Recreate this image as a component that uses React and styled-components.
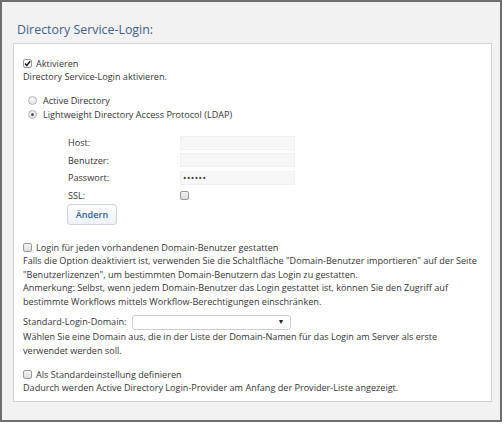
import React, { useState } from "react";
import styled, { createGlobalStyle } from "styled-components";

const Global = createGlobalStyle`
  html, body {
    margin: 0;
    padding: 0;
    background: #ffffff;
  }
  body {
    font-family: "Open Sans", "Noto Sans", sans-serif;
    color: #333333;
  }
`;

const Frame = styled.div`
  box-sizing: border-box;
  width: 502px;
  height: 422px;
  border: 2px solid #6e6e6e;
  background: #f2f2f2;
  padding: 0 8px 0 11px;
`;

const Title = styled.h2`
  margin: 0;
  padding: 20px 0 0 4px;
  height: 21px;
  font-size: 12.4px;
  font-weight: 400;
  line-height: 16px;
  color: #3f6189;
`;

const Panel = styled.div`
  box-sizing: border-box;
  height: 359px;
  background: #ffffff;
  border: 1px solid #d2d2d2;
  padding: 12.5px 9px 0 9px;
  font-size: 9.1px;
  line-height: 13.5px;
  white-space: nowrap;
`;

const CheckRow = styled.label`
  display: flex;
  align-items: center;
  gap: 4px;
  height: 13.5px;
`;

const Box = styled.span`
  box-sizing: border-box;
  width: 9px;
  height: 9px;
  border: 1px solid #9a9a9a;
  border-radius: 2px;
  background: ${(p) => (p.$on ? "#ffffff" : "linear-gradient(#f4f4f4, #dcdcdc)")};
  display: flex;
  align-items: center;
  justify-content: center;
  flex: none;
`;

const Text = styled.div`
  margin: 0;
`;

const RadioList = styled.div`
  margin: 10px 0 0 5px;
  display: flex;
  flex-direction: column;
  gap: 1px;
`;

const RadioRow = styled.label`
  display: flex;
  align-items: center;
  gap: 6px;
  height: 13.5px;
`;

const Dot = styled.span`
  box-sizing: border-box;
  width: 9px;
  height: 9px;
  border-radius: 50%;
  border: 1px solid #b5b5b5;
  background: radial-gradient(circle at 50% 40%, #fbfbfb, #d8d8d8);
  display: flex;
  align-items: center;
  justify-content: center;
  flex: none;
  &::after {
    content: "";
    width: 3px;
    height: 3px;
    border-radius: 50%;
    background: ${(p) => (p.$on ? "#555" : "transparent")};
  }
`;

const Form = styled.div`
  margin: 12.5px 0 0 45px;
  display: grid;
  grid-template-columns: 112px 115px;
  grid-auto-rows: 17.5px;
  align-items: center;
`;

const Field = styled.div`
  box-sizing: border-box;
  height: 14px;
  background: #f7f7f7;
  border: 1px solid #f0f0f0;
  font-size: 9px;
  line-height: 12px;
  padding-left: 2px;
  letter-spacing: 0.5px;
`;

const Button = styled.button`
  box-sizing: border-box;
  margin: 0 0 0 44px;
  width: 50px;
  height: 21px;
  border: 1px solid #cfd4da;
  border-radius: 3px;
  background: linear-gradient(#fbfcfd, #eef2f6);
  color: #2d5f9a;
  font-family: inherit;
  font-size: 9.1px;
  font-weight: 600;
  padding: 0;
`;

const Section = styled.div`
  margin-top: ${(p) => p.$top || "14px"};
`;

const SelectRow = styled.div`
  display: flex;
  align-items: center;
  gap: 6px;
  height: 16px;
`;

const Select = styled.div`
  box-sizing: border-box;
  width: 159px;
  height: 15px;
  border: 1px solid #cfcfcf;
  border-radius: 3px;
  background: #fff;
  display: flex;
  align-items: center;
  justify-content: flex-end;
  padding-right: 6px;
  font-size: 7px;
  color: #222;
`;

function Check({ on, children }) {
  return (
    <CheckRow>
      <Box $on={on}>
        {on && (
          <svg width="7" height="7" viewBox="0 0 7 7">
            <path d="M1 3.6 L2.8 5.4 L6.2 1.2" fill="none" stroke="#111" strokeWidth="1.4" />
          </svg>
        )}
      </Box>
      <span>{children}</span>
    </CheckRow>
  );
}

export default function App() {
  const [mode] = useState("ldap");
  return (
    <>
      <Global />
      <Frame>
        <Title>Directory Service-Login:</Title>
        <Panel>
          <Check on>Aktivieren</Check>
          <Text>Directory Service-Login aktivieren.</Text>

          <RadioList>
            <RadioRow>
              <Dot $on={mode === "ad"} />
              Active Directory
            </RadioRow>
            <RadioRow>
              <Dot $on={mode === "ldap"} />
              Lightweight Directory Access Protocol (LDAP)
            </RadioRow>
          </RadioList>

          <Form>
            <span>Host:</span>
            <Field />
            <span>Benutzer:</span>
            <Field />
            <span>Passwort:</span>
            <Field>••••••</Field>
            <span>SSL:</span>
            <Box />
          </Form>
          <Button>Ändern</Button>

          <Section $top="15.5px">
            <Check>Login für jeden vorhandenen Domain-Benutzer gestatten</Check>
            <Text>
              Falls die Option deaktiviert ist, verwenden Sie die Schaltfläche "Domain-Benutzer importieren" auf der Seite
              <br />
              "Benutzerlizenzen", um bestimmten Domain-Benutzern das Login zu gestatten.
            </Text>
            <Text>
              Anmerkung: Selbst, wenn jedem Domain-Benutzer das Login gestattet ist, können Sie den Zugriff auf
              <br />
              bestimmte Workflows mittels Workflow-Berechtigungen einschränken.
            </Text>
          </Section>

          <Section $top="6px">
            <SelectRow>
              <span>Standard-Login-Domain:</span>
              <Select>▼</Select>
            </SelectRow>
            <Text>
              Wählen Sie eine Domain aus, die in der Liste der Domain-Namen für das Login am Server als erste
              <br />
              verwendet werden soll.
            </Text>
          </Section>

          <Section $top="10.5px">
            <Check>Als Standardeinstellung definieren</Check>
            <Text>Dadurch werden Active Directory Login-Provider am Anfang der Provider-Liste angezeigt.</Text>
          </Section>
        </Panel>
      </Frame>
    </>
  );
}
